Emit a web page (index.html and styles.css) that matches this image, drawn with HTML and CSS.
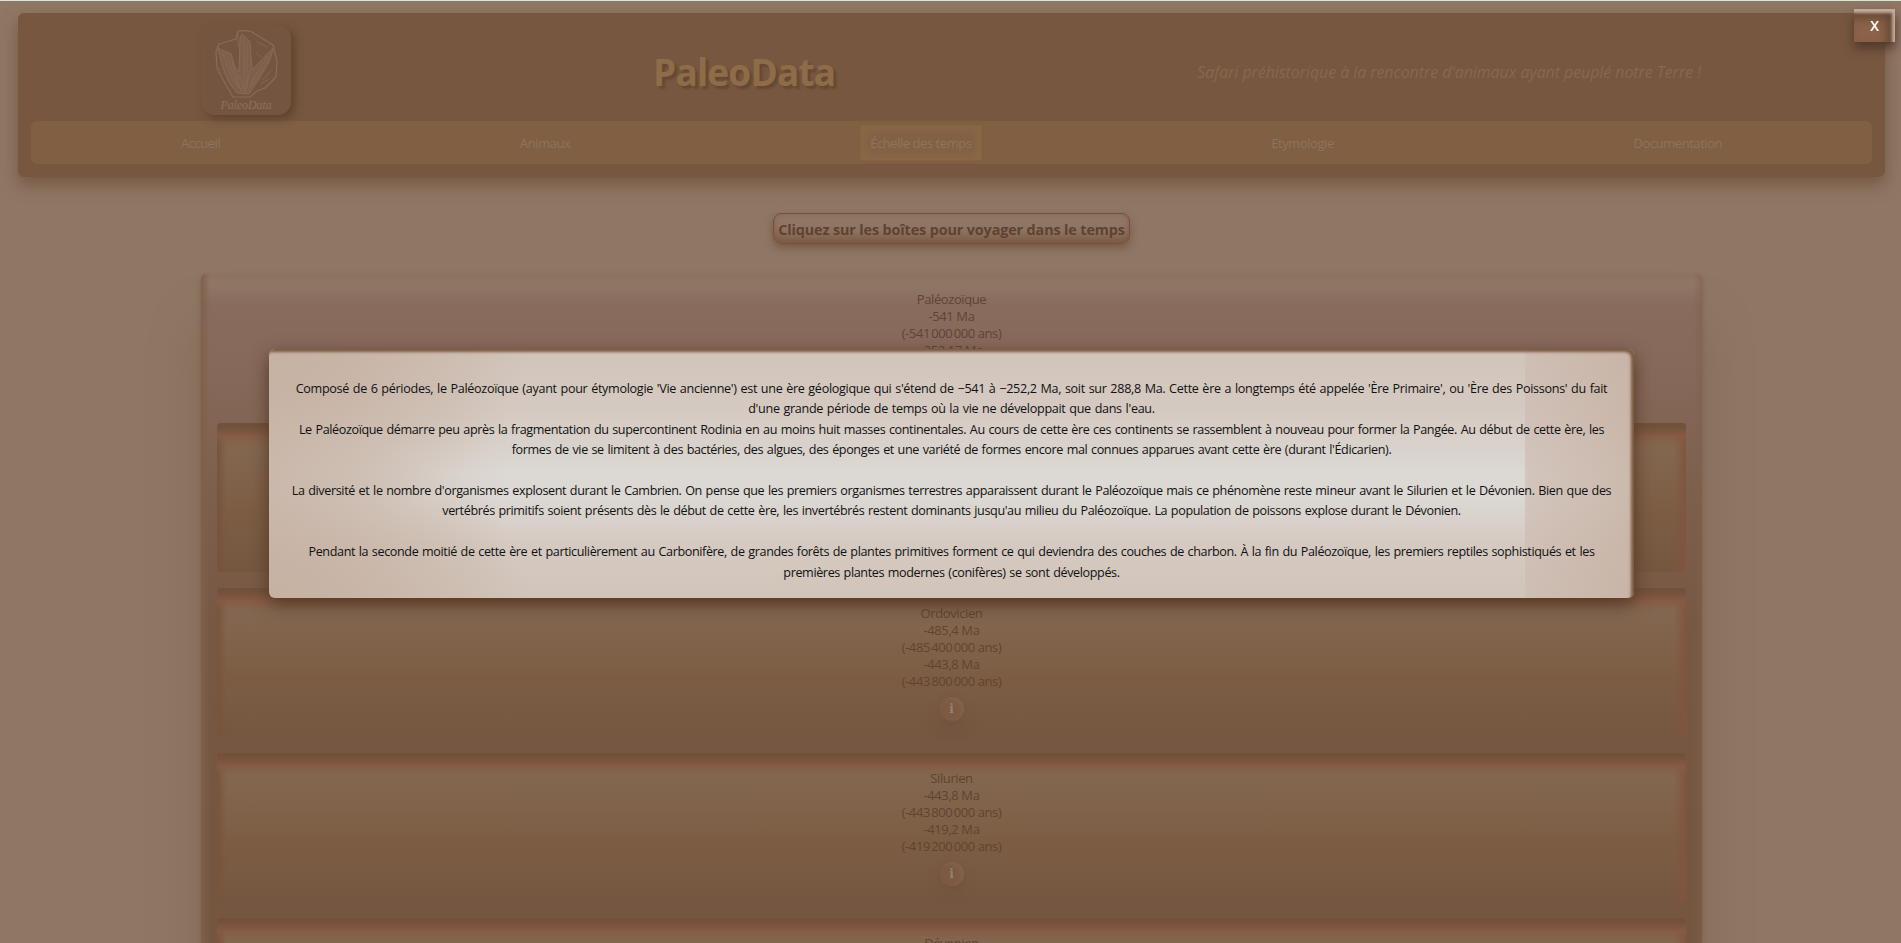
FILE: index.html
```html
<!DOCTYPE html>
<html lang="fr">
<head>
<meta charset="utf-8">
<title>PaleoData</title>
<link rel="stylesheet" href="styles.css">
</head>
<body>
<header class="header">
  <div class="banner">
    <div class="logo">
      <svg class="print" viewBox="0 0 90 90" fill="none" stroke="#8a6c58" stroke-linejoin="round" stroke-linecap="round">
        <path stroke-width="1.2" d="M35 14 L37 6 Q44 5 50 6.500 L72 20 L76 37 L75 52 L64 63 L56 66 L49 72 L32 72 L25 60 L16 43 L15 27 L18 19 L25 17 Z"/>
        <path stroke-width=".9" fill="#7d5f4b" d="M17 23 L30 29 L34 42 L38 47 L39 14 L41 9 L49 17 L51 45 L73 22 L68 37 L58 54 L48 69 L36 68 L27 56 L21 40 Z"/>
        <path stroke-width=".8" stroke-dasharray="1.5 1.2" d="M21 27 L32 56 M25 29 L38 64 M30 33 L40 66 M43 14 V66 M46 18 V64 M49 45 L44 68 M67 31 L48 60 M69 33 L51 61 M38 50 L44 66 M34 55 L42 68 M56 48 L47 66 M37 9 V22 M56 17 L66 22 M70 45 L62 55 M18 43 L26 52 M55 28 L60 32 M60 59 L68 54"/>
      </svg>
      <span class="logo-name">PaleoData</span>
    </div>
    <h1 class="title">PaleoData</h1>
    <p class="tagline">Safari préhistorique à la rencontre d'animaux ayant peuplé notre Terre !</p>
  </div>
  <nav class="nav">
    <a>Accueil</a><a>Animaux</a><a class="active">Échelle des temps</a><a>Etymologie</a><a>Documentation</a>
  </nav>
</header>
<h2 class="hint"><span>Cliquez sur les boîtes pour voyager dans le temps</span></h2>
<main class="era">
  <div class="dates"><p>Paléozoïque</p><p>-541 Ma</p><p>(-541&#8239;000&#8239;000 ans)</p><p>-252,17 Ma</p></div>
  <section class="period"></section>
  <section class="period"><div class="dates"><p>Ordovicien</p><p>-485,4 Ma</p><p>(-485&#8239;400&#8239;000 ans)</p><p>-443,8 Ma</p><p>(-443&#8239;800&#8239;000 ans)</p></div><i class="info">i</i></section>
  <section class="period"><div class="dates"><p>Silurien</p><p>-443,8 Ma</p><p>(-443&#8239;800&#8239;000 ans)</p><p>-419,2 Ma</p><p>(-419&#8239;200&#8239;000 ans)</p></div><i class="info">i</i></section>
  <section class="period"><div class="dates"><p>Dévonien</p></div></section>
</main>
<div class="modal">
  <p><span class="wide">Composé de 6 périodes, le Paléozoïque (ayant pour étymologie 'Vie ancienne') est une ère géologique qui s'étend de −541 à −252,2 Ma, soit sur 288,8 Ma. Cette ère a longtemps été appelée 'Ère Primaire', ou 'Ère des Poissons' du fait<br>d'une grande période de temps où la vie ne développait que dans l'eau.</span><br>Le Paléozoïque démarre peu après la fragmentation du supercontinent Rodinia en au moins huit masses continentales. Au cours de cette ère ces continents se rassemblent à nouveau pour former la Pangée. Au début de cette ère, les<br>formes de vie se limitent à des bactéries, des algues, des éponges et une variété de formes encore mal connues apparues avant cette ère (durant l'Édicarien).</p>
  <p>La diversité et le nombre d'organismes explosent durant le Cambrien. On pense que les premiers organismes terrestres apparaissent durant le Paléozoïque mais ce phénomène reste mineur avant le Silurien et le Dévonien. Bien que des<br>vertébrés primitifs soient présents dès le début de cette ère, les invertébrés restent dominants jusqu'au milieu du Paléozoïque. La population de poissons explose durant le Dévonien.</p>
  <p>Pendant la seconde moitié de cette ère et particulièrement au Carbonifère, de grandes forêts de plantes primitives forment ce qui deviendra des couches de charbon. À la fin du Paléozoïque, les premiers reptiles sophistiqués et les<br>premières plantes modernes (conifères) se sont développés.</p>
</div>
<button class="close">X</button>
</body>
</html>
```
FILE: styles.css
```css
* { box-sizing: border-box; margin: 0; padding: 0; }
html { overflow: hidden; }
body {
  height: 943px;
  overflow: hidden;
  background: #8f7765;
  border-top: 1px solid #dce4da;
  padding: 12px 16px 0 18px;
  font-family: "Open Sans", "Noto Sans", sans-serif;
  font-size: 13px;
}
.header {
  height: 164px;
  padding: 12px 13px 13px;
  border-radius: 6px;
  background: #77573f;
  box-shadow: 0 8px 16px #6f513bcc;
}
.banner { height: 96px; display: grid; grid-template-columns: 90px 1fr auto; padding: 0 171px 0 170px; }
.logo {
  width: 90px; height: 90px; border-radius: 13px;
  background: #745540;
  box-shadow: 4px 4px 8px #583e2bcc;
  position: relative;
}
.print { width: 90px; height: 90px; display: block; }
.logo-name {
  position: absolute; left: 0; width: 100%; top: 72px;
  text-align: center; font: italic 12px/16px "Liberation Serif", serif; letter-spacing: -.1px; color: #8d7160;
}
.title {
  justify-self: start; margin-left: 362px; margin-top: 22px;
  font-size: 37px; line-height: 50px; font-weight: 700; letter-spacing: -.85px; white-space: nowrap;
  color: #8f6c49; text-shadow: 3px 3px 2px #654933;
}
.tagline { margin-top: 35px; font-size: 16px; line-height: 24px; font-style: italic; letter-spacing: -.08px; color: #886850; white-space: nowrap; }
.nav { height: 43px; border-radius: 6px; background: #805f42; display: flex; justify-content: space-around; align-items: center; color: #8e7360; }
.nav a { padding: 1px 9px 0; line-height: 33px; height: 34px; letter-spacing: -.45px; }
.nav .active { background: #836144; box-shadow: inset 0 0 8px 4px #8b6847, 0 0 3px #8b6847; }
.hint { display: flex; justify-content: center; margin-top: 36px; }
.hint span {
  width: 357px; height: 31px; border: 1px solid #76503f; border-radius: 8px;
  font-size: 14.4px; line-height: 31px; letter-spacing: -.13px; text-align: center; white-space: nowrap; color: #5f4230;
  box-shadow: inset 0 -12px 12px -6px #7a573f, inset 0 0 4px #846450, 0 4px 8px #775943;
}
.era {
  width: 1501px; height: 669px; margin: 30px 0 0 183px; padding: 16px; border-radius: 5px 5px 0 0;
  background:
    linear-gradient(90deg, #80604a, #80604a00 9px, #80604a00 1492px, #80604a88),
    linear-gradient(#8b7260 0, #8f7765 10px, #886b5d 32px, #87695b 90px, #7d5f4d 220px, #775843 350px, #755640 550px);
  box-shadow: 0 50px 50px #775a4666, 0 3px 5px #7f624f;
}
.dates { height: 85px; padding-top: 1px; line-height: 17px; letter-spacing: -.4px; text-align: center; color: #5f4431; }
.era > .dates { margin-bottom: 48px; }
.period {
  height: 149px; margin-bottom: 16px; padding-top: 16px; border-radius: 4px;
  background:
    linear-gradient(#6f503a 0, #72513ae0 5px, #72513a00 13px),
    linear-gradient(#875a45 0, #875a45 11px, #875a4500 22px),
    linear-gradient(90deg, #77543c, #77543c00 10px, #80553f00 1457px, #80553f),
    linear-gradient(#83664f 0, #83664f 30px, #7c5d44 90px, #755640 149px);
}
.period:last-child { height: 25px; margin-bottom: 0; border-radius: 4px 4px 0 0; }
.info {
  display: block; width: 24px; height: 24px; margin: 8px auto 0; border-radius: 50%;
  font: bold 12px/24px "DejaVu Serif", serif; text-align: center; color: #978072; background: #7c5a43;
  box-shadow: inset -3px 2px 5px #83634f, 0 6px 12px #6f523dcc;
}
.modal {
  position: absolute; left: 269px; top: 349px; width: 1365px; height: 249px;
  padding: 30px 0 0; border-radius: 6px;
  text-align: center; font-size: 12.6px; line-height: 20.4px; letter-spacing: -.385px; word-spacing: .8px; white-space: nowrap; color: #111;
  background:
    linear-gradient(90deg, #c8b2a400 1256px, #cdbab0a0 1256px, #c6b1a2cc 100%),
    radial-gradient(ellipse 260px 190px at 0 0, #c6b1a2, #c6b1a200),
    radial-gradient(ellipse 260px 170px at 0 100%, #c6b1a2, #c6b1a200),
    linear-gradient(90deg, #c8b4a6aa 0, #c8b4a600 240px),
    linear-gradient(#d1c4ba 0, #d5cac2 25%, #dcd8d3 50%, #dcd8d3 60%, #d5cac2 78%, #d1c4ba 100%);
  box-shadow: inset -3px 3px 3px #7c5a42, 0 6px 18px #533824;
}
.modal p { margin-bottom: 20.4px; }
.wide { letter-spacing: -.31px; }
.close {
  position: absolute; left: 1854px; top: 9px; width: 41px; height: 33px; border: 0;
  background: #8b6349; color: #fff; font: 600 14px "Open Sans", sans-serif;
  box-shadow: inset -3px 4px 3px #c4aa9c, inset -7px 8px 12px #5c4231, 0 6px 10px #50382a;
}
```
